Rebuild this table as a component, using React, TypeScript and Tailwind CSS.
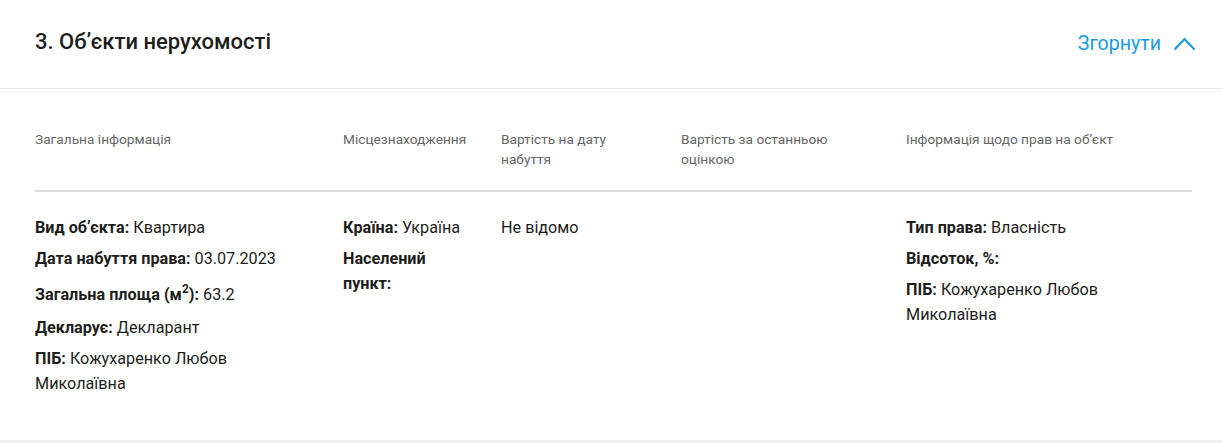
import React from 'react';

type Field = { label: React.ReactNode; value?: string; tall?: boolean };

const general: Field[] = [
  { label: 'Вид об\u02bcєкта:', value: 'Квартира' },
  { label: 'Дата набуття права:', value: '03.07.2023' },
  {
    label: (
      <>
        Загальна площа (м<sup className="text-[12px] -top-[7px]">2</sup>):
      </>
    ),
    value: '63.2',
    tall: true,
  },
  { label: 'Декларує:', value: 'Декларант' },
  { label: 'ПІБ:', value: 'Кожухаренко Любов Миколаївна' },
];

const location: Field[] = [
  { label: 'Країна:', value: 'Україна' },
  { label: 'Населений пункт:' },
];

const rights: Field[] = [
  { label: 'Тип права:', value: 'Власність' },
  { label: 'Відсоток, %:' },
  { label: 'ПІБ:', value: 'Кожухаренко Любов Миколаївна' },
];

const FieldList = ({ items }: { items: Field[] }) => (
  <div className="flex flex-col gap-[6px]">
    {items.map((f, i) => (
      <div key={i} className={f.tall ? 'leading-[25px] pt-[5px] pb-[2px]' : 'leading-[25px]'}>
        <span className="font-bold">{f.label}</span>
        {f.value ? ` ${f.value}` : ''}
      </div>
    ))}
  </div>
);

export default function App() {
  return (
    <div className="min-h-[443px] bg-[#f0f0f4] font-['Roboto',sans-serif] text-[#1d1d1b]">
      <div className="bg-white h-[440px]">
        {/* header */}
        <div className="h-[89px] pl-[35px] pr-[26px] flex items-center justify-between border-b border-[#e8e8e8]">
          <h2 className="text-[22px] font-medium pb-[6px]">3. Об&#700;єкти нерухомості</h2>
          <button className="flex items-center gap-[12px] text-[#1a9be0] text-[19.6px]">
            Згорнути
            <svg width="23" height="14" viewBox="0 0 23 14" fill="none">
              <path d="M1.5 12.5 L11.5 2 L21.5 12.5" stroke="#1a9be0" strokeWidth="2.2" />
            </svg>
          </button>
        </div>

        <div className="pl-[35px] pr-[30px]">
          {/* column headers */}
          <div className="grid grid-cols-[308px_158px_180px_225px_1fr] pt-[40px] pb-[21px] border-b-2 border-[#dadada] text-[13.7px] leading-[20px] text-[#666]">
            <div>Загальна інформація</div>
            <div>Місцезнаходження</div>
            <div className="pr-[30px]">Вартість на дату набуття</div>
            <div className="pr-[40px]">Вартість за останньою оцінкою</div>
            <div>Інформація щодо прав на об&#700;єкт</div>
          </div>

          {/* body */}
          <div className="grid grid-cols-[308px_158px_180px_225px_1fr] pt-[23px] text-[16.2px]">
            <div className="pr-[50px]">
              <FieldList items={general} />
            </div>
            <div className="pr-[40px]">
              <FieldList items={location} />
            </div>
            <div className="leading-[25px]">Не відомо</div>
            <div />
            <div className="pr-[80px]">
              <FieldList items={rights} />
            </div>
          </div>
        </div>
      </div>
    </div>
  );
}
